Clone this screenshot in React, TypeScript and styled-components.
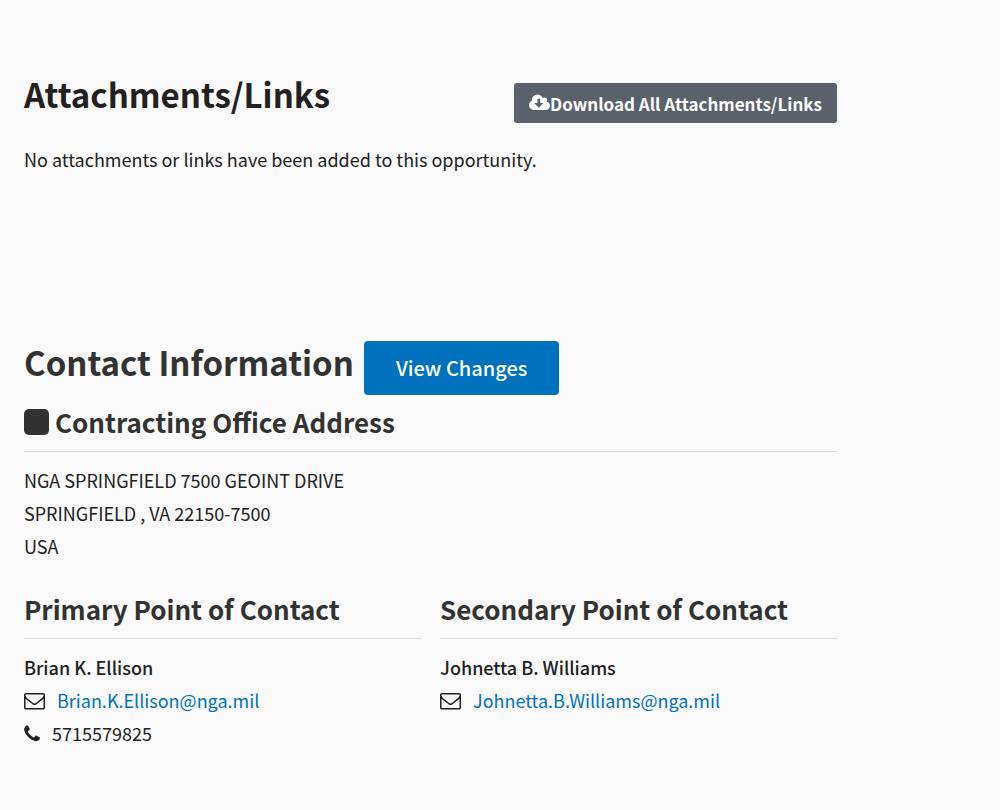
import React from "react";
import styled, { createGlobalStyle } from "styled-components";

const GlobalStyle = createGlobalStyle`
  *, *::before, *::after { box-sizing: border-box; }
  body {
    margin: 0;
    background: #f9f9f9;
    color: #212121;
    font-family: "Noto Sans CJK SC", "Open Sans", sans-serif;
    font-size: 18px;
    line-height: 33px;
  }
  h2, h3, p, address { margin: 0; font-style: normal; }
`;

const Page = styled.main`
  padding: 73px 163px 56px 24px;
`;

const Section = styled.section<{ $gap?: number }>`
  margin-bottom: ${(p) => p.$gap ?? 0}px;
`;

const AttachmentsHeader = styled.div`
  display: flex;
  flex-wrap: wrap;
  justify-content: space-between;
  align-items: flex-start;
  margin-bottom: 20px;
`;

const ContactHeader = styled.div`
  display: flex;
  flex-wrap: wrap;
  align-items: flex-start;
  gap: 10px;
  margin-bottom: 9px;
`;

const Title = styled.h2<{ $tone: string }>`
  color: ${(p) => p.$tone};
  font-size: 33px;
  line-height: 42px;
  font-weight: 700;
`;

const Subtitle = styled.h3`
  display: flex;
  align-items: center;
  gap: 6px;
  padding-bottom: 11px;
  margin-bottom: 12px;
  border-bottom: 1px solid #dfdfdf;
  color: #323232;
  font-size: 26px;
  line-height: 36px;
  font-weight: 700;
`;

const SquareIcon = styled.span`
  width: 25px;
  height: 26px;
  border-radius: 5px;
  background: #323232;
`;

const DownloadButton = styled.button`
  display: flex;
  align-items: center;
  height: 40px;
  margin-top: 10px;
  padding: 0 15px;
  border: 0;
  border-radius: 3px;
  background: #5b616b;
  color: #fff;
  font: inherit;
  font-size: 17px;
  font-weight: 700;
`;

const ChangesButton = styled.button`
  height: 54px;
  padding: 0 32px 2px;
  border: 0;
  border-radius: 4px;
  background: #0071bc;
  color: #fff;
  font: inherit;
  font-size: 20px;
  font-weight: 500;
`;

const Columns = styled.div`
  display: grid;
  grid-template-columns: 1fr 1fr;
  gap: 19px;
  margin-top: 28px;
`;

const Name = styled.p`
  font-weight: 500;
`;

const ContactRow = styled.p`
  display: flex;
  align-items: center;
  gap: 12px;
`;

const MailLink = styled.a`
  color: #0071bc;
  text-decoration: none;
`;

const Icon = styled.svg`
  flex: none;
  fill: currentColor;
`;

const CloudDownload = () => (
  <Icon width="21" height="20" viewBox="0 0 1920 1792" aria-hidden="true">
    <path d="M1280 928q0-14-9-23t-23-9h-224v-352q0-13-9.500-22.500t-22.500-9.500h-192q-13 0-22.500 9.500t-9.500 22.500v352h-224q-13 0-22.500 9.500t-9.500 22.500q0 14 9 23l352 352q9 9 23 9t23-9l351-351q10-12 10-24zm640 224q0 159-112.500 271.500t-271.500 112.500h-1088q-185 0-316.500-131.500t-131.500-316.500q0-130 70-240t188-165q-2-30-2-43 0-212 150-362t362-150q156 0 285.500 87t188.500 231q71-62 166-62 106 0 181 75t75 181q0 76-41 138 130 31 213.500 135.500t83.500 238.500z" />
  </Icon>
);

const Envelope = () => (
  <Icon width="21" height="21" viewBox="0 0 1792 1792" aria-hidden="true">
    <path d="M1664 1504v-768q-32 36-69 66-268 206-426 338-51 43-83 67t-86.500 48.500-102.500 24.500h-2q-48 0-102.500-24.500t-86.500-48.500-83-67q-158-132-426-338-37-30-69-66v768q0 13 9.500 22.500t22.500 9.500h1472q13 0 22.500-9.500t9.500-22.500zm0-1051v-24.500l-.5-13-3-12.500-5.500-9-9-7.500-14-2.500h-1472q-13 0-22.500 9.500t-9.500 22.500q0 168 147 284 193 152 401 317 6 5 35 29.500t46 37.500 44.500 31.500 50.500 27.500 43 9h2q20 0 43-9t50.500-27.500 44.500-31.500 46-37.500 35-29.500q208-165 401-317 54-43 100.500-115.500t46.500-131.500zm128-37v1088q0 66-47 113t-113 47h-1472q-66 0-113-47t-47-113v-1088q0-66 47-113t113-47h1472q66 0 113 47t47 113z" />
  </Icon>
);

const Phone = () => (
  <Icon width="16" height="20" viewBox="192 0 1408 1792" aria-hidden="true">
    <path d="M1600 1240q0 27-10 70.500t-21 68.500q-21 50-122 106-94 51-186 51-27 0-53-3.500t-57.500-12.500-47-14.500-55.500-20.500-49-18q-98-35-175-83-127-79-264-216t-216-264q-48-77-83-175-3-9-18-49t-20.500-55.500-14.500-47-12.500-57.500-3.500-53q0-92 51-186 56-101 106-122 25-11 68.500-21t70.500-10q14 0 21 3 18 6 53 76 11 19 30 54t35 63.500 31 53.500q3 4 17.500 25t21.500 35.500 7 28.500q0 20-28.500 50t-62 55-62 53-28.500 46q0 9 5 22.500t8.500 20.500 14 24 11.500 19q76 137 174 235t235 174q2 1 19 11.500t24 14 20.500 8.500 22.500 5q18 0 46-28.500t53-62 55-62 50-28.500q14 0 28.500 7t35.500 21.500 25 17.500q25 15 53.500 31t63.500 35 54 30q70 35 76 53 3 7 3 21z" />
  </Icon>
);

type ContactProps = { title: string; name: string; email: string; phone?: string };

const Contact = ({ title, name, email, phone }: ContactProps) => (
  <div>
    <Subtitle>{title}</Subtitle>
    <Name>{name}</Name>
    <ContactRow>
      <Envelope />
      <MailLink href={`mailto:${email}`}>{email}</MailLink>
    </ContactRow>
    {phone && (
      <ContactRow>
        <Phone />
        {phone}
      </ContactRow>
    )}
  </div>
);

export default function App() {
  return (
    <>
      <GlobalStyle />
      <Page>
        <Section $gap={165}>
          <AttachmentsHeader>
            <Title $tone="#212121">Attachments/Links</Title>
            <DownloadButton type="button">
              <CloudDownload />
              Download All Attachments/Links
            </DownloadButton>
          </AttachmentsHeader>
          <p>No attachments or links have been added to this opportunity.</p>
        </Section>
        <Section>
          <ContactHeader>
            <Title $tone="#323232">Contact Information</Title>
            <ChangesButton type="button">View Changes</ChangesButton>
          </ContactHeader>
          <Subtitle>
            <SquareIcon />
            Contracting Office Address
          </Subtitle>
          <address>
            NGA SPRINGFIELD 7500 GEOINT DRIVE
            <br />
            SPRINGFIELD , VA 22150-7500
            <br />
            USA
          </address>
          <Columns>
            <Contact
              title="Primary Point of Contact"
              name="Brian K. Ellison"
              email="Brian.K.Ellison@nga.mil"
              phone="5715579825"
            />
            <Contact
              title="Secondary Point of Contact"
              name="Johnetta B. Williams"
              email="Johnetta.B.Williams@nga.mil"
            />
          </Columns>
        </Section>
      </Page>
    </>
  );
}
